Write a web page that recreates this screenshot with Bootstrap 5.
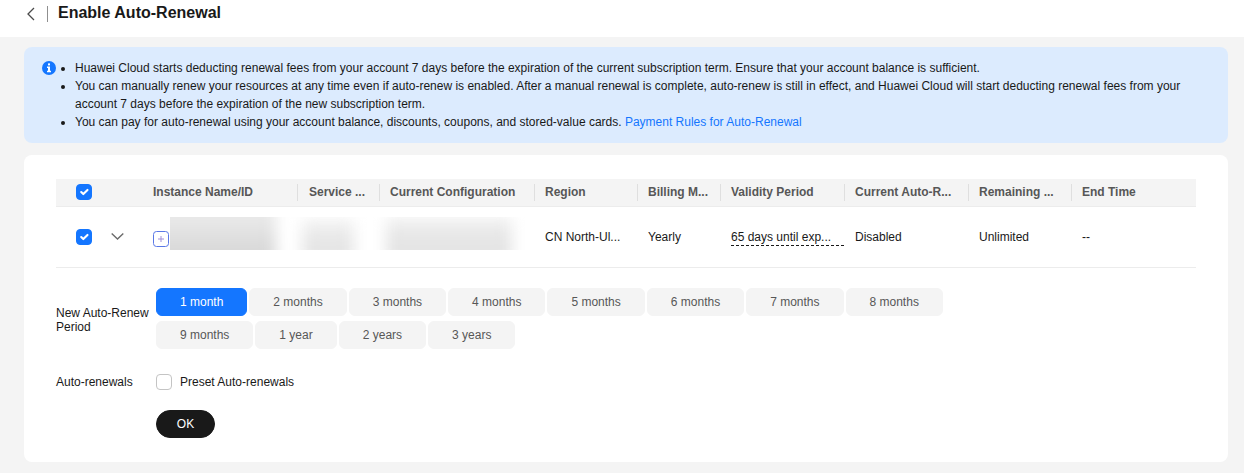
<!DOCTYPE html>
<html lang="en">
<head>
<meta charset="utf-8">
<title>Enable Auto-Renewal</title>
<link href="https://cdn.jsdelivr.net/npm/bootstrap@5.3.0/dist/css/bootstrap.min.css" rel="stylesheet">
<style>
html,body{height:473px;overflow:hidden}
body{background:#f4f4f4;font:12px/18px "Liberation Sans",Arial,sans-serif;color:#191919}
.topbar{height:37px;background:#fff;padding-left:26px}
.topbar svg{display:block;margin-top:7px}
.top-sep{width:1px;height:16px;background:#8f8f8f;margin:6px 10px 0 11px}
.top-title{font-size:16px;font-weight:700;line-height:26px;color:#191919;margin:0}
.shell{padding:10px 16px 0 24px}
.notice{background:#dcebfe;border-radius:8px;padding:12px 16px 12px 18px;margin-bottom:12px;color:#191919}
.notice ul{margin:0;padding-left:14px}
.notice a{color:#1476ff;text-decoration:none}
.notice-ico{flex:none;margin:2px 5px 0 0}
.panel{background:#fff;border-radius:8px;height:307px;padding:24px 32px}
.grid-table{table-layout:fixed;width:1140px;margin:0;font-size:12px;--bs-table-bg:transparent}
.grid-table th{height:27px;padding:0 11px;background:#f4f4f4;color:#575757;font-weight:700;border-bottom:1px solid #ececec;position:relative;white-space:nowrap;overflow:hidden;vertical-align:middle}
.grid-table th.sep::before{content:"";position:absolute;left:0;top:5px;height:17px;width:1px;background:#dfdfdf}
.grid-table th.svc-head{padding-left:12px}
.grid-table td{height:61px;padding:0 11px;color:#191919;border-bottom:1px solid #ececec;white-space:nowrap;overflow:hidden;vertical-align:middle}
.c-check{width:55px}.c-exp{width:31px}.c-name{width:155px}.c-svc{width:82px}.c-conf{width:155px}.c-reg{width:103px}.c-bill{width:83px}.c-val{width:124px}.c-auto{width:124px}.c-rem{width:103px}.c-end{width:125px}
.grid-table th.cell-check,.grid-table td.cell-check{padding:0 0 0 20px;overflow:visible}
.grid-table td.cell-exp{padding:0}
.box{width:16px;height:16px;margin:0;display:block;border-radius:4px!important;border:1px solid #c4c4c4}
.box:checked{background-color:#1476ff;border-color:#1476ff}
.plus-box{flex:none;margin-top:14px}
.blur-strip{flex:none;width:360px;height:33px;overflow:hidden;position:relative;margin-left:1px;background:#fff}
.blur-a,.blur-b,.blur-c{position:absolute;filter:blur(7px)}
.blur-a{left:-20px;top:-20px;width:126px;height:73px;background:linear-gradient(#e9e9e9 30%,#d9d9d9 70%)}
.blur-b{left:132px;top:2px;width:52px;height:44px;background:linear-gradient(#f4f4f4,#e6e6e6 50%)}
.blur-c{left:216px;top:0;width:126px;height:46px;background:linear-gradient(#f2f2f2,#e5e5e5 50%)}
.name-inner{height:40px}
.grid-table td.cell-val{padding-right:0}
.dash-text{display:block;line-height:15px;border-bottom:1px dashed #191919;margin-top:2px}
.form-line{display:flex}
.form-key{width:100px;flex:none;line-height:14px;color:#191919}
.term-line{margin-top:20px;align-items:center}
.key-low{padding-top:4px}
.term-wrap{width:800px;gap:5px 2px}
.term-btn{height:28px;padding:0 23px;font-size:12px;line-height:26px;border:1px solid #f4f4f4;background:#f4f4f4;color:#575757;border-radius:6px}
.term-btn.term-on{background:#1476ff;border-color:#1476ff;color:#fff}
.preset-line{margin-top:25px;align-items:center}
.preset-txt{margin-left:8px;line-height:16px}
.ok-line{margin:20px 0 0 100px}
.ok-btn{width:59px;height:28px;padding:0;font-size:12px;line-height:26px;background:#191919;border:1px solid #191919;color:#fff;border-radius:14px}
</style>
</head>
<body>
<header class="topbar d-flex align-items-start">
  <svg width="10" height="14" viewBox="0 0 10 14" fill="none" stroke="#4a4a4a" stroke-width="1.3"><path d="M8 1 2 7l6 6"/></svg>
  <span class="top-sep"></span>
  <h1 class="top-title">Enable Auto-Renewal</h1>
</header>
<main class="shell">
  <section class="notice d-flex">
    <svg class="notice-ico" width="14" height="14" viewBox="0 0 14 14"><circle cx="7" cy="7" r="7" fill="#1476ff"/><rect x="6" y="2.4" width="2" height="2" fill="#fff"/><path d="M5 5.5h3v4.3h1v1.4H5V9.8h1V6.9H5z" fill="#fff"/></svg>
    <ul>
      <li>Huawei Cloud starts deducting renewal fees from your account 7 days before the expiration of the current subscription term. Ensure that your account balance is sufficient.</li>
      <li>You can manually renew your resources at any time even if auto-renew is enabled. After a manual renewal is complete, auto-renew is still in effect, and Huawei Cloud will start deducting renewal fees from your account 7 days before the expiration of the new subscription term.</li>
      <li>You can pay for auto-renewal using your account balance, discounts, coupons, and stored-value cards. <a href="#">Payment Rules for Auto-Renewal</a></li>
    </ul>
  </section>
  <section class="panel">
    <table class="table grid-table">
      <colgroup><col class="c-check"><col class="c-exp"><col class="c-name"><col class="c-svc"><col class="c-conf"><col class="c-reg"><col class="c-bill"><col class="c-val"><col class="c-auto"><col class="c-rem"><col class="c-end"></colgroup>
      <thead>
        <tr>
          <th class="cell-check"><input class="form-check-input box" type="checkbox" checked aria-label="Select all"></th>
          <th></th>
          <th>Instance Name/ID</th>
          <th class="sep svc-head">Service ...</th>
          <th class="sep">Current Configuration</th>
          <th class="sep">Region</th>
          <th class="sep">Billing M...</th>
          <th class="sep">Validity Period</th>
          <th class="sep">Current Auto-R...</th>
          <th class="sep">Remaining ...</th>
          <th class="sep">End Time</th>
        </tr>
      </thead>
      <tbody>
        <tr>
          <td class="cell-check"><input class="form-check-input box" type="checkbox" checked aria-label="Select row"></td>
          <td class="cell-exp"><svg class="d-block" width="13" height="9" viewBox="0 0 13 9" fill="none" stroke="#6b6b6b" stroke-width="1.4"><path d="M.7 1.5 6.5 7l5.8-5.5"/></svg></td>
          <td colspan="3">
            <div class="name-inner d-flex">
              <svg class="plus-box" width="16" height="16" viewBox="0 0 16 16" fill="none"><rect x=".5" y=".5" width="15" height="15" rx="3" stroke="#5a78e6"/><path d="M5 8h6M8 5v6" stroke="#a08fd8"/></svg>
              <div class="blur-strip" aria-hidden="true"><i class="blur-a"></i><i class="blur-b"></i><i class="blur-c"></i></div>
            </div>
          </td>
          <td>CN North-Ul...</td>
          <td>Yearly</td>
          <td class="cell-val"><span class="dash-text">65 days until exp...</span></td>
          <td>Disabled</td>
          <td>Unlimited</td>
          <td>--</td>
        </tr>
      </tbody>
    </table>
    <div class="form-line term-line">
      <div class="form-key key-low">New Auto-Renew<br>Period</div>
      <div class="term-wrap d-flex flex-wrap">
        <button class="btn term-btn term-on">1 month</button>
        <button class="btn term-btn">2 months</button>
        <button class="btn term-btn">3 months</button>
        <button class="btn term-btn">4 months</button>
        <button class="btn term-btn">5 months</button>
        <button class="btn term-btn">6 months</button>
        <button class="btn term-btn">7 months</button>
        <button class="btn term-btn">8 months</button>
        <button class="btn term-btn">9 months</button>
        <button class="btn term-btn">1 year</button>
        <button class="btn term-btn">2 years</button>
        <button class="btn term-btn">3 years</button>
      </div>
    </div>
    <div class="form-line preset-line">
      <div class="form-key">Auto-renewals</div>
      <input class="form-check-input box" type="checkbox" id="preset">
      <label class="preset-txt" for="preset">Preset Auto-renewals</label>
    </div>
    <div class="ok-line"><button class="btn ok-btn">OK</button></div>
  </section>
</main>
<script src="https://cdn.jsdelivr.net/npm/bootstrap@5.3.0/dist/js/bootstrap.bundle.min.js"></script>
</body>
</html>
